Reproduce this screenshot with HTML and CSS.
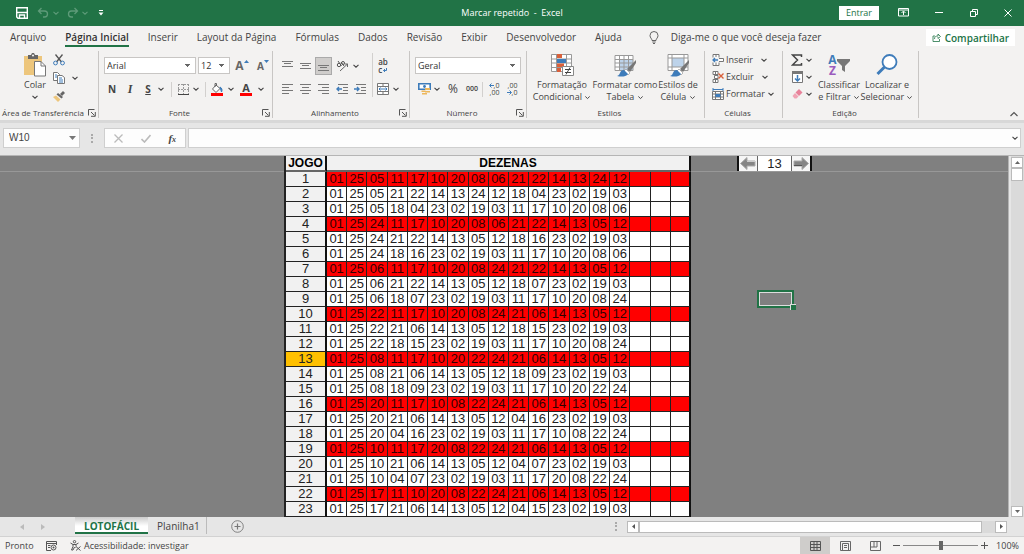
FILE: index.html
```html
<!DOCTYPE html>
<html lang="pt-BR">
<head>
<meta charset="utf-8">
<meta name="viewport" content="width=device-width, initial-scale=1">
<title>Marcar repetido - Excel</title>
<link rel="stylesheet" href="styles.css">
</head>
<body>
<svg class="defs" aria-hidden="true">
  <symbol id="chev" viewBox="0 0 8 8"><path d="M1.500 2.800 4 5.200 6.500 2.800" fill="none" stroke="currentColor" stroke-width="1.100"/></symbol>
  <symbol id="launch" viewBox="0 0 8 8"><path d="M.5 6.500V.5h6M3 3l3.500 3.500M7.300 3v4.300H3" fill="none" stroke="#555" /></symbol>
  <symbol id="brush" viewBox="0 0 24 24"><path d="M23 7 14 16l3 3 6-9z" fill="#777"/><path d="m13 16 4 4-2 2-4-4z" fill="#fff" stroke="#888" stroke-width=".6"/><path d="M4 23c4-1 2-6 7-6l4 4c-2 3-7 3-11 2z" fill="#3e7cba"/></symbol>
</svg>

<header class="titlebar">
  <div class="quick">
    <button aria-label="Salvar"><svg width="12" height="12" viewBox="0 0 12 12"><path d="M.7.7h10.600v10.600H2L.7 10z" fill="none" stroke="#fff" stroke-width="1.400"/><path d="M1 5.500h10M3.500 11V8h5v3" fill="none" stroke="#fff" stroke-width="1.400"/></svg></button>
    <button class="dim" aria-label="Desfazer"><svg width="12" height="12" viewBox="0 0 12 12"><path d="M4.500 1 1.500 4l3 3M1.500 4h6a3 3 0 0 1 0 6H6" fill="none" stroke="currentColor" stroke-width="1.300"/></svg></button>
    <button class="dim" aria-label="Opções de desfazer"><svg width="8" height="8"><use href="#chev"/></svg></button>
    <button class="dim" aria-label="Refazer"><svg width="12" height="12" viewBox="0 0 12 12"><path d="m7.500 1 3 3-3 3M10.500 4h-6a3 3 0 0 0 0 6H6" fill="none" stroke="currentColor" stroke-width="1.300"/></svg></button>
    <button class="dim" aria-label="Opções de refazer"><svg width="8" height="8"><use href="#chev"/></svg></button>
    <button aria-label="Personalizar"><svg width="8" height="8" viewBox="0 0 8 8"><path d="M2 1.500h4" stroke="#fff"/><path d="M1.500 3.500h5L4 6.500z" fill="#fff"/></svg></button>
  </div>
  <div class="doc-title">Marcar repetido&nbsp; -&nbsp; Excel</div>
  <div class="window-tools">
    <button class="signin">Entrar</button>
    <button aria-label="Opções da faixa"><svg width="11" height="9" viewBox="0 0 11 9"><path d="M.5.5h10v7.500H.5zM.5 2h10M5.500 7V3.500M3.500 5l2-2 2 2" fill="none" stroke="#fff"/></svg></button>
    <button aria-label="Minimizar"><svg width="8" height="8" viewBox="0 0 8 8"><path d="M0 3.500h8" stroke="#fff"/></svg></button>
    <button aria-label="Restaurar"><svg width="8" height="8" viewBox="0 0 8 8"><path d="M.5 2.500h5v5h-5zM2.500 2V.5h5v5H6" fill="none" stroke="#fff"/></svg></button>
    <button aria-label="Fechar"><svg width="8" height="8" viewBox="0 0 8 8"><path d="m.5.5 7 7m0-7-7 7" stroke="#fff"/></svg></button>
  </div>
</header>

<nav class="tabs">
  <a href="#">Arquivo</a><a href="#" class="active">Página Inicial</a><a href="#">Inserir</a><a href="#">Layout da Página</a><a href="#">Fórmulas</a><a href="#">Dados</a><a href="#">Revisão</a><a href="#">Exibir</a><a href="#">Desenvolvedor</a><a href="#">Ajuda</a>
  <button class="tell"><svg width="10" height="13" viewBox="0 0 10 13"><path d="M3 9.500C3 7.500 1 7 1 4.500a4 4 0 0 1 8 0C9 7 7 7.500 7 9.500zM3.300 11h3.400M4 12.500h2" fill="none" stroke="#555" stroke-width=".9"/></svg>Diga-me o que você deseja fazer</button>
  <button class="share"><svg width="9" height="9" viewBox="0 0 9 9"><path d="M3 3H1v5.500h6.500V6M2.500 6c0-2.500 1.500-3 3.500-3V1l2.500 2.500L6 5.500V4" fill="none" stroke="#217346" stroke-width=".8"/></svg>Compartilhar</button>
</nav>

<section class="ribbon">
  <div class="group">
    <div class="body clip">
      <button class="big"><svg width="24" height="24" viewBox="0 0 24 24"><path d="M1 3h18v19H1z" fill="#edc67c"/><path d="M5 2h3l1-2h2l1 2h3v4H5z" fill="#666"/><circle cx="10" cy="2.500" r="1" fill="#fff"/><path d="M11.500 8.500H18l4.500 4.500v10h-11z" fill="#fff" stroke="#777"/><path d="M18 8.500V13h4.500" fill="none" stroke="#777"/></svg><span>Colar</span><svg width="8" height="8"><use href="#chev"/></svg></button>
      <div class="clip-tools">
        <button aria-label="Recortar"><svg width="12" height="12" viewBox="0 0 12 12"><path d="m2.500.5 6 7.500M9.500.5 3.500 8" stroke="#555" stroke-width="1.300"/><circle cx="2.500" cy="9" r="1.900" fill="none" stroke="#3e7cba"/><circle cx="9.500" cy="9" r="1.900" fill="none" stroke="#3e7cba"/></svg></button><span></span>
        <button aria-label="Copiar"><svg width="12" height="12" viewBox="0 0 12 12"><path d="M.5.5h4l2 2v6h-6z" fill="#fff" stroke="#777"/><path d="M4.500 3.500H9l2.500 2v6h-7z" fill="#fff" stroke="#777"/><path d="M2 3h2M2 5h2M6 6h3M6 8h4M6 10h4" stroke="#3e7cba"/></svg></button><button aria-label="Opções de copiar"><svg width="8" height="8"><use href="#chev"/></svg></button>
        <button aria-label="Pincel"><svg width="12" height="11" viewBox="0 0 12 11"><path d="m7 3 3-3 2 2-3 3z" fill="#666"/><path d="m5 2 5 4-1.500 1.500-5-4z" fill="#666"/><path d="m3 4.500 4.500 4L5 11 0 6z" fill="#edc67c"/></svg></button>
      </div>
    </div>
    <h2>Área de Transferência</h2><button class="launch" aria-label="Mais opções"><svg width="8" height="8"><use href="#launch"/></svg></button>
  </div>

  <div class="group">
    <div class="body">
      <div class="font-pick">
        <select aria-label="Fonte"><option>Arial</option></select>
        <select aria-label="Tamanho"><option>12</option></select>
        <button aria-label="Aumentar fonte"><b class="grow">A</b><svg width="5" height="10" viewBox="0 0 5 10"><path d="m0 4 2.500-3L5 4z" fill="#3e7cba"/></svg></button>
        <button aria-label="Diminuir fonte"><b class="shrink">A</b><svg width="5" height="10" viewBox="0 0 5 10"><path d="m0 1 2.500 3L5 1z" fill="#3e7cba"/></svg></button>
      </div>
      <div class="font-style">
        <button class="glyph">N</button><button class="glyph ital">I</button><button class="glyph under">S</button><button aria-label="Sublinhado"><svg width="8" height="8"><use href="#chev"/></svg></button><i class="sep"></i>
        <button aria-label="Bordas"><svg width="11" height="11" viewBox="0 0 11 11"><path d="M.5 0v10M5.500 0v10M10.500 0v10M0 .5h11M0 5.500h11" fill="none" stroke="#999" stroke-dasharray="2 1"/><path d="M0 10.500h11" stroke="#444"/></svg></button><button aria-label="Opções de bordas"><svg width="8" height="8"><use href="#chev"/></svg></button><i class="sep"></i>
        <button aria-label="Cor de preenchimento"><svg width="12" height="13" viewBox="0 0 12 13"><path d="m5 2 4 3.500-4 4L1.500 6z" fill="#fff" stroke="#666"/><path d="M4 4V.5h1.500V3" fill="none" stroke="#666"/><path d="M9 4c2 1 2.500 3 1.500 5z" fill="#3e7cba" stroke="#3e7cba"/><path d="M0 10h12v3H0z" fill="#f00"/></svg></button><button aria-label="Opções de preenchimento"><svg width="8" height="8"><use href="#chev"/></svg></button>
        <button class="fontcolor" aria-label="Cor da fonte"><b>A</b></button><button aria-label="Opções de cor"><svg width="8" height="8"><use href="#chev"/></svg></button>
      </div>
    </div>
    <h2>Fonte</h2><button class="launch" aria-label="Mais opções"><svg width="8" height="8"><use href="#launch"/></svg></button>
  </div>

  <div class="group">
    <div class="body align">
      <button aria-label="Superior"><svg width="11" height="11" viewBox="0 0 11 11"><path d="M0 1.500h11M2 3.500h7M0 6.500h11" stroke="#777"/></svg></button>
      <button aria-label="Meio"><svg width="11" height="11" viewBox="0 0 11 11"><path d="M0 3.500h11M2 5.500h7M0 8.500h11" stroke="#777"/></svg></button>
      <button class="on" aria-label="Inferior"><svg width="11" height="11" viewBox="0 0 11 11"><path d="M0 5.500h11M2 7.500h7M0 10.500h11" stroke="#777"/></svg></button>
      <button aria-label="Orientação"><svg width="13" height="12" viewBox="0 0 13 12"><circle cx="3" cy="5" r="1.700" fill="none" stroke="#555"/><path d="m2 1 3.500 5M5 2l3 4" stroke="#555"/><circle cx="7" cy="3" r="1.500" fill="none" stroke="#555"/><path d="m4 11 7.500-7M8.500 4h3v3" fill="none" stroke="#666"/></svg></button>
      <button class="left" aria-label="Opções de orientação"><svg width="8" height="8"><use href="#chev"/></svg></button>
      <i class="sep tall"></i>
      <button class="wrap" aria-label="Quebrar texto"><span>ab</span><span>c<svg width="4" height="4" viewBox="0 0 4 4"><path d="M3.500 0v2.500H.5M2 1 .5 2.500 2 4" fill="none" stroke="#3e7cba"/></svg></span></button><span></span>
      <button aria-label="Esquerda"><svg width="11" height="10" viewBox="0 0 11 10"><path d="M0 .5h11M0 3.500h7M0 6.500h11M0 9.500h7" stroke="#777"/></svg></button>
      <button aria-label="Centro"><svg width="11" height="10" viewBox="0 0 11 10"><path d="M0 .5h11M2 3.500h7M0 6.500h11M2 9.500h7" stroke="#777"/></svg></button>
      <button aria-label="Direita"><svg width="11" height="10" viewBox="0 0 11 10"><path d="M0 .5h11M4 3.500h7M0 6.500h11M4 9.500h7" stroke="#777"/></svg></button>
      <button aria-label="Diminuir recuo"><svg width="12" height="10" viewBox="0 0 12 10"><path d="M2 .5h10M7 3.500h5M7 6.500h5M2 9.500h10" stroke="#777"/><path d="M6 5H1m2-2L1 5l2 2" fill="none" stroke="#3e7cba" stroke-width="1.400"/></svg></button>
      <button aria-label="Aumentar recuo"><svg width="12" height="10" viewBox="0 0 12 10"><path d="M2 .5h10M7 3.500h5M7 6.500h5M2 9.500h10" stroke="#777"/><path d="M0 5h5M3 3l2 2-2 2" fill="none" stroke="#3e7cba" stroke-width="1.400"/></svg></button>
      <button aria-label="Mesclar"><svg width="12" height="12" viewBox="0 0 12 12"><path d="M.5.5h11v11H.5zM.5 3.500h11M.5 8.500h11M6 .5v3M6 8.500v3" fill="#fff" stroke="#777"/><path d="M2 6h8M3.500 4.500 2 6l1.500 1.500M8.500 4.500 10 6 8.500 7.500" fill="none" stroke="#3e7cba"/></svg></button>
      <button aria-label="Opções de mesclar"><svg width="8" height="8"><use href="#chev"/></svg></button>
    </div>
    <h2>Alinhamento</h2><button class="launch" aria-label="Mais opções"><svg width="8" height="8"><use href="#launch"/></svg></button>
  </div>

  <div class="group">
    <div class="body">
      <div class="num-pick"><select aria-label="Formato de número"><option>Geral</option></select></div>
      <div class="num-tools">
        <button aria-label="Moeda"><svg width="13" height="12" viewBox="0 0 13 12"><path d="M.8.8h11.400v5.400H.8z" fill="#fff" stroke="#3e7cba" stroke-width="1.600"/><circle cx="6.500" cy="3.500" r="1.400" fill="#3e7cba"/><path d="M7 5h5v2H7zM7 8h5v1.500H7zM3.500 7.500h4V9h-4zM4 10h5v1.500H4z" fill="#edb75c"/></svg></button>
        <button aria-label="Opções de moeda"><svg width="8" height="8"><use href="#chev"/></svg></button>
        <button class="pct">%</button><button class="thousand">000</button><i class="sep"></i>
        <button class="dec" aria-label="Aumentar casas"><span><svg width="5" height="5" viewBox="0 0 5 5"><path d="M5 2.500H1M2.500.5l-2 2 2 2" fill="none" stroke="#3e7cba"/></svg>,0</span><span>,00</span></button>
        <button class="dec" aria-label="Diminuir casas"><span>,00</span><span><svg width="5" height="5" viewBox="0 0 5 5"><path d="M0 2.500h4M2.500.5l2 2-2 2" fill="none" stroke="#3e7cba"/></svg>,0</span></button>
      </div>
    </div>
    <h2>Número</h2><button class="launch" aria-label="Mais opções"><svg width="8" height="8"><use href="#launch"/></svg></button>
  </div>

  <div class="group">
    <div class="body styles">
      <button class="big"><svg width="24" height="24" viewBox="0 0 24 24"><path d="M1.500 1.500h20v17h-20zM1.500 6h20M1.500 10h20M1.500 14.500h20M6.500 1v18M16.500 1v18" fill="#fff" stroke="#999"/><path d="M7 1h5v4H7zM7 10.500h7V14H7zM7 15h4v4H7z" fill="#d9603b"/><path d="M7 6h9v4H7z" fill="#3e7cba"/><path d="M12.500 13.500h11v9h-11z" fill="#fff" stroke="#888"/><path d="M15 16.500h6M15 19.500h6M20 14.500l-4 7" stroke="#444"/></svg><span>Formatação<br>Condicional <svg width="7" height="7"><use href="#chev"/></svg></span></button>
      <button class="big"><svg width="24" height="24" viewBox="0 0 24 24"><path d="M2 2.500h18v15H2z" fill="#fff"/><path d="M6.500 6.500H20v11H6.500z" fill="#bdd3ea"/><path d="M2 2.500h18v15H2zM2 6.500h18M2 10h18M2 14h18M6.500 2v16M11 2v16M15.500 2v16" fill="none" stroke="#999"/><use href="#brush" width="24" height="24"/></svg><span>Formatar como<br>Tabela <svg width="7" height="7"><use href="#chev"/></svg></span></button>
      <button class="big"><svg width="24" height="24" viewBox="0 0 24 24"><path d="M2 1.500h20v16H2z" fill="#fff"/><path d="M6 5h12v9H6z" fill="#bdd3ea"/><path d="M2 1.500h20v16H2zM2 5h20M2 14h20M6 1v17M18 1v17" fill="none" stroke="#999"/><use href="#brush" width="24" height="24"/></svg><span>Estilos de<br>Célula <svg width="7" height="7"><use href="#chev"/></svg></span></button>
    </div>
    <h2>Estilos</h2><span></span>
  </div>

  <div class="group">
    <div class="body cells">
      <div><button><svg width="12" height="12" viewBox="0 0 12 12"><path d="M1 3.500V.5h6v3M4 .5V3M1 8.500v3h6v-3M4 8.500v3M7 4.500h4.500v3H7" fill="#fff" stroke="#777"/><path d="M6 6H1m2-2L1 6l2 2" fill="none" stroke="#3e7cba" stroke-width="1.300"/></svg>Inserir</button><button aria-label="Opções de inserir"><svg width="8" height="8"><use href="#chev"/></svg></button></div>
      <div><button><svg width="12" height="12" viewBox="0 0 12 12"><path d="M1 3.500V.5h5v3zM1 8.500h5v3H1zM2.500 4.500H6v3H2.500zM3.500.5v3M3.500 8.500v3" fill="#fff" stroke="#777"/><path d="m6.500 2.500 5 5m0-5-5 5" stroke="#d9603b" stroke-width="1.400"/></svg>Excluir</button><button aria-label="Opções de excluir"><svg width="8" height="8"><use href="#chev"/></svg></button></div>
      <div><button><svg width="12" height="12" viewBox="0 0 12 12"><path d="M.5 3.500h11v8H.5zM.5 6h11M.5 9h11M3.500 3v8.500M8.500 3v8.500" fill="#fff" stroke="#777"/><path d="M3.500 6h5v3h-5z" fill="#3e7cba"/><path d="M1 1.500h10M1 0v3M11 0v3" stroke="#3e7cba"/></svg>Formatar <svg width="8" height="8"><use href="#chev"/></svg></button></div>
    </div>
    <h2>Células</h2><span></span>
  </div>

  <div class="group">
    <div class="body edit">
      <div class="edit-tools">
        <button aria-label="AutoSoma"><svg width="12" height="12" viewBox="0 0 12 12"><path d="M10.500 3V1H1.500L6.500 6l-5 5h9V9" fill="none" stroke="#444" stroke-width="1.500"/></svg></button><svg width="8" height="8"><use href="#chev"/></svg>
        <button aria-label="Preencher"><svg width="11" height="12" viewBox="0 0 11 12"><path d="M.5.5h10v11H.5z" fill="#fff" stroke="#777"/><path d="M0 0h11v3H0z" fill="#777"/><path d="M5.500 4v6M3 7.500l2.500 2.500L8 7.500" fill="none" stroke="#3e7cba" stroke-width="1.500"/></svg></button><svg width="8" height="8"><use href="#chev"/></svg>
        <button aria-label="Limpar"><svg width="11" height="10" viewBox="0 0 11 10"><path d="m7 0 3.500 3.500L7 7 3.500 3.500z" fill="#e8829a"/><path d="m3 4 3.500 3.500L4.500 9.500h-2L.5 7z" fill="#f0a3b4"/></svg></button><svg width="8" height="8"><use href="#chev"/></svg>
      </div>
      <button class="big"><span class="az"><span><b class="a">A</b><b class="z">Z</b></span><svg width="13" height="13" viewBox="0 0 13 13"><path d="M0 0h13v2L8 7v6L5 11V7L0 2z" fill="#777"/></svg></span><span>Classificar<br>e Filtrar <svg width="7" height="7"><use href="#chev"/></svg></span></button>
      <button class="big"><svg width="24" height="24" viewBox="0 0 24 24"><circle cx="14.500" cy="9" r="7" fill="#fff" stroke="#3e7cba" stroke-width="1.800"/><path d="m9.500 14-7 7" stroke="#3e7cba" stroke-width="3"/></svg><span>Localizar e<br>Selecionar <svg width="7" height="7"><use href="#chev"/></svg></span></button>
    </div>
    <h2>Edição</h2><span></span>
  </div>
  <button class="collapse" aria-label="Recolher a faixa"><svg width="8" height="8" viewBox="0 0 8 8"><path d="m.5 6 3.500-3.500L7.500 6" fill="none" stroke="#555" stroke-width="1.200"/></svg></button>
</section>

<section class="formula-bar">
  <div class="namebox"><input aria-label="Caixa de nome" value="W10"><svg width="7" height="5" viewBox="0 0 7 5"><path d="M0 0h7L3.500 4z" fill="#777"/></svg></div>
  <i class="grip"></i>
  <div class="fx">
    <button aria-label="Cancelar"><svg width="9" height="9" viewBox="0 0 9 9"><path d="m.5.5 8 8m0-8-8 8" stroke="#bbb" stroke-width="1.300"/></svg></button>
    <button aria-label="Inserir"><svg width="10" height="9" viewBox="0 0 10 9"><path d="M.5 5 3.500 8l6-7" fill="none" stroke="#bbb" stroke-width="1.600"/></svg></button>
    <button aria-label="Inserir função"><em>f</em><em class="x">x</em></button>
  </div>
  <div class="formula"><input aria-label="Barra de fórmulas"><svg width="8" height="8"><use href="#chev"/></svg></div>
</section>

<main class="workspace">
  <div class="sheet">
    <table>
      <colgroup><col class="game-col"></colgroup>
      <thead><tr><th scope="col">JOGO</th><th scope="colgroup" colspan="18">DEZENAS</th></tr></thead>
      <tbody id="games"></tbody>
    </table>
    <div class="side">
      <div class="spinner">
        <button aria-label="Anterior"><svg width="16" height="13" viewBox="0 0 16 13"><path d="M.5 6.500 7 .5v3.500h8v5H7v3.500z" fill="#858585" stroke="#aaa"/><path d="M7 4.500h8" stroke="#ccc"/></svg></button>
        <output>13</output>
        <button aria-label="Próximo"><svg width="16" height="13" viewBox="0 0 16 13"><path d="M15.500 6.500 9 .5v3.500H1v5h8v3.500z" fill="#858585" stroke="#aaa"/><path d="M1 8.500h8" stroke="#555"/></svg></button>
      </div>
      <div class="cursor"></div>
    </div>
  </div>
  <div class="vscroll">
    <button aria-label="Rolar para cima"><svg width="5" height="3" viewBox="0 0 5 3"><path d="M0 3 2.500 0 5 3z" fill="#666"/></svg></button>
    <i class="thumb"></i>
    <button class="down" aria-label="Rolar para baixo"><svg width="5" height="3" viewBox="0 0 5 3"><path d="M0 0h5L2.500 3z" fill="#666"/></svg></button>
  </div>
</main>

<nav class="sheet-tabs">
  <button class="arrow" aria-label="Planilha anterior"><svg width="4" height="6" viewBox="0 0 4 6"><path d="M4 0v6L0 3z" fill="#bbb"/></svg></button>
  <button class="arrow" aria-label="Próxima planilha"><svg width="4" height="6" viewBox="0 0 4 6"><path d="M0 0v6l4-3z" fill="#bbb"/></svg></button>
  <a href="#" class="active">LOTOFÁCIL</a><a href="#">Planilha1</a>
  <button class="add" aria-label="Nova planilha"><svg width="13" height="13" viewBox="0 0 13 13"><circle cx="6.500" cy="6.500" r="5.800" fill="none" stroke="#777" stroke-width=".9"/><path d="M6.500 3.500v6M3.500 6.500h6" stroke="#777" stroke-width="1.200"/></svg></button>
  <i class="grip"></i>
  <div class="hscroll">
    <button aria-label="Rolar para a esquerda"><svg width="3" height="5" viewBox="0 0 3 5"><path d="M3 0v5L0 2.500z" fill="#555"/></svg></button>
    <i class="thumb"></i>
    <button aria-label="Rolar para a direita"><svg width="3" height="5" viewBox="0 0 3 5"><path d="M0 0v5l3-2.500z" fill="#555"/></svg></button>
  </div>
</nav>

<footer class="status">
  <span class="ready">Pronto</span>
  <button aria-label="Gravar macro"><svg width="11" height="10" viewBox="0 0 11 10"><path d="M5 9.500H.5v-9h10V4M.5 2.500h10M2 4.500h2.500M2 6.500h2" fill="none" stroke="#555"/><circle cx="7.500" cy="6.500" r="2.500" fill="#f3f2f1" stroke="#555"/><circle cx="7.500" cy="6.500" r="1" fill="#555"/></svg></button>
  <button class="access"><svg width="11" height="11" viewBox="0 0 11 11"><circle cx="4.500" cy="1.700" r="1.200" fill="none" stroke="#555"/><path d="m.5 3 2.500 1.500v2L1.500 10H3l1.500-3L5.500 8M8.500 3 6 4.500v2M3 4.500h3M6 6.500l4.500 4m0-4-4.500 4" fill="none" stroke="#555"/></svg>Acessibilidade: investigar</button>
  <div class="views">
    <button class="on" aria-label="Normal"><svg width="11" height="10" viewBox="0 0 11 10"><path d="M.5.5h10v9H.5zM.5 3.500h10M.5 6.500h10M4 .5v9M7 .5v9" fill="none" stroke="#555"/></svg></button>
    <button aria-label="Layout da Página"><svg width="11" height="10" viewBox="0 0 11 10"><path d="M.5.5h10v9H.5zM2.500 2.500h6v7h-6zM4 4.500h3M4 6.500h3" fill="none" stroke="#666"/></svg></button>
    <button aria-label="Quebra de página"><svg width="11" height="10" viewBox="0 0 11 10"><path d="M.5.5h10v9H.5zM4 .5v5.500M7 .5V6M.5 6H7" fill="none" stroke="#666"/></svg></button>
  </div>
  <button class="zoom-step" aria-label="Reduzir"><svg width="7" height="7" viewBox="0 0 7 7"><path d="M0 3.500h7" stroke="#555"/></svg></button>
  <input type="range" aria-label="Zoom" min="0" max="100" value="50">
  <button class="zoom-step" aria-label="Ampliar"><svg width="7" height="7" viewBox="0 0 7 7"><path d="M0 3.500h7M3.500 0v7" stroke="#555"/></svg></button>
  <button class="zoom-value">100%</button>
</footer>
<script src="games.js"></script>
</body>
</html>
```
FILE: styles.css
```css
* { box-sizing: border-box; }
body { margin: 0; height: 100vh; display: flex; flex-direction: column; overflow: hidden; background: #e6e6e6; color: #444; font: 10px/12px "Open Sans", "Noto Sans", sans-serif; }
button, input, select { font: inherit; color: inherit; margin: 0; padding: 0; border: 0; background: none; border-radius: 0; }
button { display: flex; align-items: center; justify-content: center; white-space: nowrap; }
a { color: inherit; text-decoration: none; white-space: nowrap; }
svg { display: block; flex: none; }
.defs { position: absolute; width: 0; height: 0; }

.titlebar { flex: none; display: grid; grid-template-columns: 1fr auto 1fr; align-items: center; height: 26px; padding-bottom: 1px; background: #217346; color: #fff; }
.quick { display: grid; grid-template-columns: 14px 21px 11px 19px 10px 16px; align-items: center; justify-items: end; padding-left: 14px; }
.dim { color: #5e9b79; }
.doc-title { font-size: 9px; }
.window-tools { display: grid; grid-template-columns: 40px 49px 22px 47px 22px; justify-content: end; align-items: center; padding-right: 5px; }
.signin { height: 14px; background: #fff; color: #217346; font-size: 9px; }

.tabs { flex: none; display: flex; align-items: flex-start; gap: 19px; height: 25px; padding: 0 9px 0 10px; background: #f3f2f1; font-size: 10px; }
.tabs a { height: 21px; padding-top: 5px; border-bottom: 2px solid transparent; }
.tabs .active { font-weight: 600; color: #333; border-color: #217346; }
.tell { gap: 12px; height: 22px; padding-left: 8px; }
.share { gap: 4px; height: 17px; margin: 3px 0 0 auto; padding: 0 6px; background: #fff; color: #217346; font-weight: 600; }

.ribbon { flex: none; display: grid; grid-template-columns: 99px 174px 137px 117px 178px 78px 136px 1fr; height: 69px; padding-bottom: 2px; background: #f3f2f1; }
.group { display: grid; grid-template-columns: 1fr 12px; grid-template-rows: 1fr 10px; border-right: 1px solid #c8c6c4; }
.body { grid-column: 1 / 3; padding: 0 5px; min-width: 0; }
.group h2 { margin: 0; font-size: 8px; line-height: 10px; font-weight: 400; text-align: center; white-space: nowrap; min-width: 0; }
.launch { height: 10px; }
.sep { width: 1px; height: 15px; background: #d2d0ce; }
.big { flex-direction: column; justify-content: flex-start; gap: 2px; text-align: center; padding-top: 2px; font-size: 9px; }
.big > span { line-height: 12px; }
.big span svg { display: inline-block; vertical-align: middle; }
.clip { display: grid; grid-template-columns: 40px 30px; padding-left: 15px; }
.clip-tools { display: grid; grid-template-columns: 14px 14px; grid-auto-rows: 18px; align-items: center; column-gap: 2px; margin-left: -3px; }

select { appearance: none; height: 17px; padding-left: 2px; border: 1px solid #c8c6c4; background: linear-gradient(#666, #666) no-repeat right 5px top 6px / 5px 1px, linear-gradient(#666, #666) no-repeat right 6px top 7px / 3px 1px, linear-gradient(#666, #666) no-repeat right 7px top 8px / 1px 1px, #fff; color: #333; font-size: 9px; }
.font-pick { display: grid; grid-template-columns: 92px 32px 20px 18px; column-gap: 2px; align-items: center; height: 29px; }
.font-pick button { align-items: flex-start; color: #666; }
.grow { font-size: 12px; line-height: 14px; }
.shrink { font-size: 10px; line-height: 14px; }
.font-style { display: grid; grid-template-columns: 16px 20px 16px 10px 10px 14px 12px 6px 18px 10px 20px 10px; place-items: center; height: 18px; }
.glyph { font-size: 10px; font-weight: 700; }
.ital { font-family: "Liberation Serif", serif; font-size: 12px; font-style: italic; }
.under { text-decoration: underline; }
.fontcolor b { width: 12px; font-size: 11px; line-height: 10px; border-bottom: 3px solid #f00; }
.align { display: grid; grid-template-columns: 18px 18px 18px 20px 16px 8px 14px 12px; grid-template-rows: 29px 18px; align-content: start; place-items: center; }
.align .on { width: 17px; height: 18px; background: #cfcdcb; border: 1px solid #aaa; }
.left { justify-self: start; }
.tall { grid-row: 1 / 3; grid-column: 6; height: 44px; }
.wrap { flex-direction: column; align-items: flex-start; font-size: 8px; line-height: 8px; font-weight: 600; }
.wrap span { display: flex; align-items: center; gap: 1px; }
.num-pick { display: grid; align-items: center; height: 29px; }
.num-tools { display: grid; grid-template-columns: 18px 8px 24px 14px 6px 18px 18px; place-items: center; height: 18px; }
.pct { font-size: 12px; }
.thousand { font-size: 7px; font-weight: 600; }
.dec { flex-direction: column; align-items: flex-end; font-size: 7px; line-height: 7px; }
.dec span { display: flex; align-items: center; }
.styles { display: grid; grid-template-columns: 60px 66px 40px; justify-content: start; }
.styles .big, .edit .big { justify-self: center; }
.cells { display: grid; grid-auto-rows: 17px; align-items: center; padding-left: 7px; font-size: 9px; }
.cells > div { display: flex; gap: 7px; }
.cells button { gap: 2px; }
.edit { display: grid; grid-template-columns: 25px 48px 48px; padding-left: 7px; }
.edit-tools { display: grid; grid-template-columns: 14px 10px; grid-auto-rows: 17px; align-items: center; column-gap: 1px; }
.az { display: flex; align-items: center; height: 24px; }
.az > span { display: flex; flex-direction: column; font-size: 12px; line-height: 11px; }
.az .a { color: #3e7cba; }
.az .z { color: #9a5bbd; }
.collapse { justify-self: end; align-self: end; padding: 0 6px 0 0; }

.formula-bar { flex: none; display: flex; align-items: center; height: 36px; padding: 0 3px 2px; border-top: 3px solid #d8d8d8; border-bottom: 1px solid #b5b5b5; gap: 2px; }
.namebox, .fx, .formula { display: flex; align-items: center; height: 20px; background: #fdfdfd; border: 1px solid #cfcfcf; }
.namebox { width: 77px; padding: 0 4px 0 5px; }
.namebox input { width: 60px; font-family: "Liberation Sans", Arial, sans-serif; }
.grip { width: 2px; height: 9px; margin: 0 9px; border-left: 2px dotted #aaa; }
.fx { width: 82px; justify-content: space-around; }
.fx em { font: italic 700 11px "Liberation Serif", serif; }
.fx .x { font-size: 8px; align-self: flex-end; }
.formula { flex: 1; padding-right: 1px; }
.formula input { flex: 1; }

.workspace { flex: 1; min-height: 0; display: flex; }
.sheet { flex: 1; position: relative; display: flex; align-items: flex-start; overflow: hidden; padding-left: 284px; background: #808080; border-right: 1px solid #b5b5b5; }
.sheet::before { content: ""; position: absolute; left: 0; right: 0; top: 15px; height: 1px; background: #989898; }
table { position: relative; flex: none; width: 407px; table-layout: fixed; border-collapse: separate; border-spacing: 0; border-left: 2px solid #222; color: #222; font: 13px/14px "Liberation Sans", Arial, sans-serif; text-align: center; }
.game-col { width: 41px; }
th, td { height: 15px; padding: 0; border-right: 1px solid #222; border-bottom: 1px solid #222; background: #fff; font-weight: 400; }
th:first-child, th:last-child, td:last-child { border-right: 2px solid #111; }
th { background: #f1f1f1; }
thead th, thead th:first-child { height: 16px; border-bottom: 2px solid #666; color: #000; font-size: 12px; line-height: 14px; font-weight: 700; }
.repeat td { background: #f00; color: #300; }
.current th { background: #ffc000; }
.side { margin-left: 46px; width: 75px; }
.spinner { position: relative; display: grid; grid-template-columns: 18px 1fr 18px; height: 15px; border: solid #111; border-width: 0 2px; background: #f6f6f6; }
.spinner output { border: solid #666; border-width: 0 1px; background: #fff; text-align: center; color: #222; font: 13px/15px "Liberation Sans", Arial, sans-serif; }
.cursor { width: 37px; height: 18px; margin: 119px 0 0 20px; border: 2px solid #217346; box-shadow: inset 0 0 0 1px #ddd; }
.cursor::after { content: ""; display: block; width: 5px; height: 5px; margin: 12px 0 0 31px; background: #217346; border: solid #ddd; border-width: 1px 0 0 1px; }
.vscroll { flex: none; display: flex; flex-direction: column; width: 15px; padding: 1px 1px 0 2px; background: linear-gradient(90deg, #e6e6e6 2px, #dadada 2px); }
.vscroll button { height: 11px; border: 1px solid #bbb; background: #fff; }
.vscroll .thumb { height: 13px; border: 1px solid #bbb; background: #fff; }
.vscroll .down { margin-top: auto; }

.sheet-tabs { flex: none; display: flex; align-items: center; height: 20px; padding: 0 17px 0 14px; border-bottom: 1px solid #d2d2d2; }
.arrow { width: 16px; height: 12px; margin-right: 5px; }
.sheet-tabs a { align-self: stretch; padding: 3px 6px 0 9px; margin-bottom: 2px; }
.sheet-tabs .active { margin-left: 19px; padding: 3px 9px 0; color: #217346; font-weight: 700; border-bottom: 2px solid #217346; background: linear-gradient(#ccc, #fff 60%); }
.sheet-tabs a + a { border-right: 1px solid #bbb; }
.add { margin-left: 12px; padding-left: 12px; }
.sheet-tabs .grip { margin: 0 10px 0 auto; }
.hscroll { flex: 0 1 380px; display: flex; height: 12px; background: #dadada; }
.hscroll button { width: 12px; border: 1px solid #bbb; background: #fff; }
.hscroll .thumb { flex: 1; margin-right: 13px; border: 1px solid #bbb; background: #fff; }

.status { flex: none; display: flex; align-items: center; height: 17px; padding: 0 5px; background: #f3f2f1; font-size: 9px; }
.ready { width: 41px; }
.access { gap: 3px; margin-left: 13px; }
.views { display: grid; grid-template-columns: 30px 30px 30px; align-self: stretch; margin-left: auto; }
.views .on { background: #cfcdcb; }
.zoom-step { width: 7px; margin: 0 3px; }
.status input { appearance: none; width: 75px; height: 9px; background: linear-gradient(#888, #888) no-repeat center / 100% 1px; }
.status input::-webkit-slider-thumb { appearance: none; width: 4px; height: 9px; background: #666; }
.zoom-value { width: 28px; justify-content: flex-end; }
```
FILE: games.js
```js
const games = [
  "01 25 05 11 17 10 20 08 06 21 22 14 13 24 12",
  "01 25 05 21 22 14 13 24 12 18 04 23 02 19 03",
  "01 25 05 18 04 23 02 19 03 11 17 10 20 08 06",
  "01 25 24 11 17 10 20 08 06 21 22 14 13 05 12",
  "01 25 24 21 22 14 13 05 12 18 16 23 02 19 03",
  "01 25 24 18 16 23 02 19 03 11 17 10 20 08 06",
  "01 25 06 11 17 10 20 08 24 21 22 14 13 05 12",
  "01 25 06 21 22 14 13 05 12 18 07 23 02 19 03",
  "01 25 06 18 07 23 02 19 03 11 17 10 20 08 24",
  "01 25 22 11 17 10 20 08 24 21 06 14 13 05 12",
  "01 25 22 21 06 14 13 05 12 18 15 23 02 19 03",
  "01 25 22 18 15 23 02 19 03 11 17 10 20 08 24",
  "01 25 08 11 17 10 20 22 24 21 06 14 13 05 12",
  "01 25 08 21 06 14 13 05 12 18 09 23 02 19 03",
  "01 25 08 18 09 23 02 19 03 11 17 10 20 22 24",
  "01 25 20 11 17 10 08 22 24 21 06 14 13 05 12",
  "01 25 20 21 06 14 13 05 12 04 16 23 02 19 03",
  "01 25 20 04 16 23 02 19 03 11 17 10 08 22 24",
  "01 25 10 11 17 20 08 22 24 21 06 14 13 05 12",
  "01 25 10 21 06 14 13 05 12 04 07 23 02 19 03",
  "01 25 10 04 07 23 02 19 03 11 17 20 08 22 24",
  "01 25 17 11 10 20 08 22 24 21 06 14 13 05 12",
  "01 25 17 21 06 14 13 05 12 04 15 23 02 19 03"
];
const COLUMNS = 18;
const CURRENT = 13;
const body = document.getElementById("games");

games.forEach((line, index) => {
  const row = body.insertRow();
  const head = document.createElement("th");
  head.scope = "row";
  head.textContent = index + 1;
  row.append(head);
  const numbers = line.split(" ");
  for (let i = 0; i < COLUMNS; i++) row.insertCell().textContent = numbers[i] || "";
  if (index % 3 === 0) row.classList.add("repeat");
  if (index + 1 === CURRENT) row.classList.add("current");
});
```
